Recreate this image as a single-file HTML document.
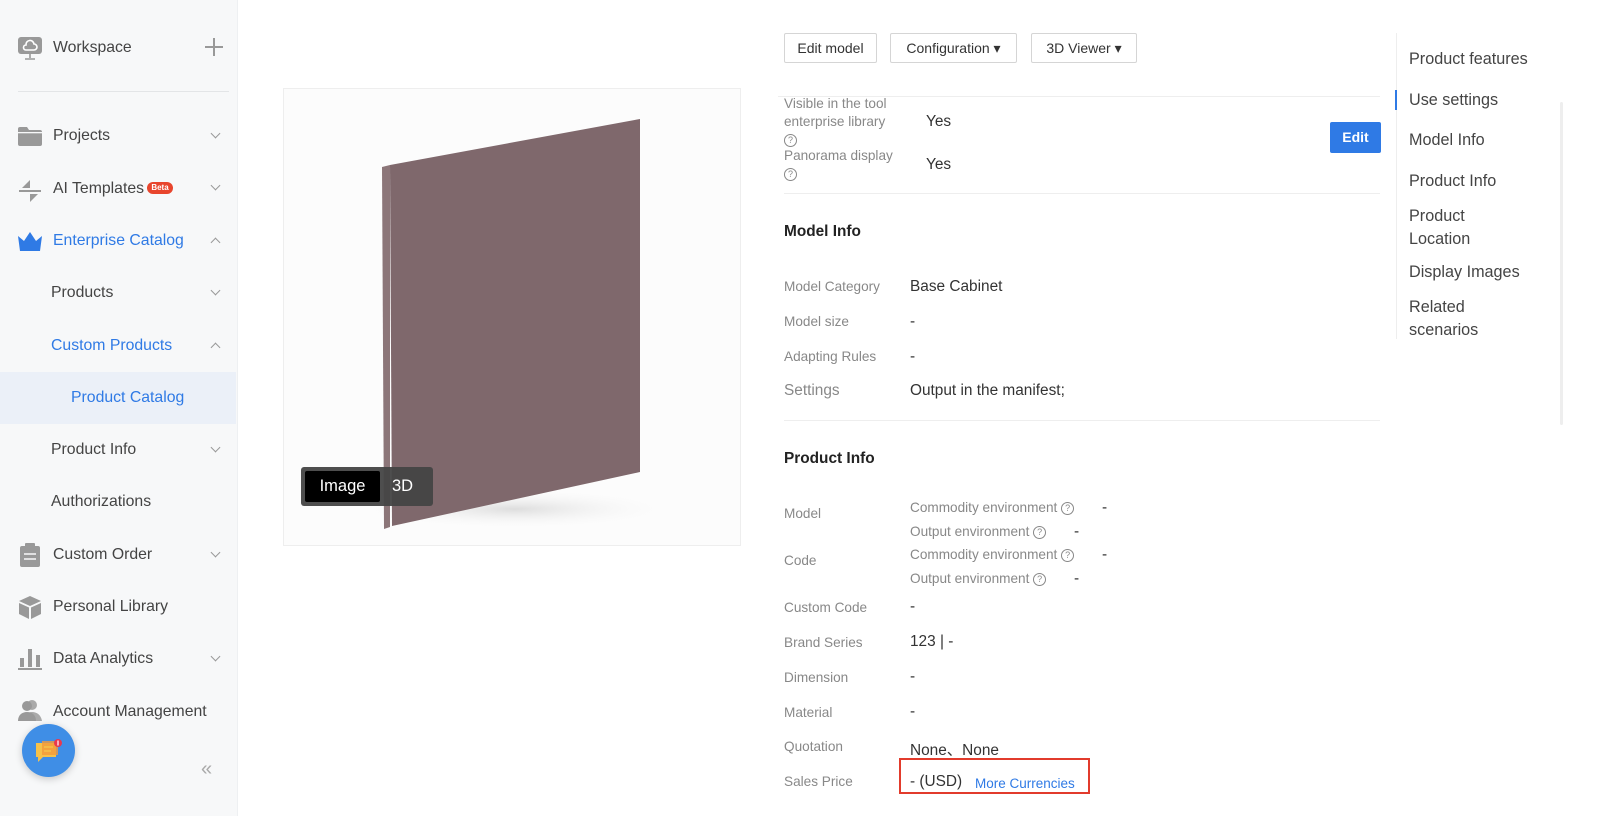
<!DOCTYPE html>
<html><head><meta charset="utf-8"><style>
*{margin:0;padding:0;box-sizing:border-box}
body{width:1600px;height:816px;overflow:hidden;background:#fff;font-family:"Liberation Sans",Arial,sans-serif;color:#333;position:relative}
.a{position:absolute;white-space:nowrap}
.sb{position:absolute;left:0;top:0;width:238px;height:816px;background:#f7f8f9;border-right:1px solid #eef0f2}
.nav{font-size:15.8px;color:#444}
.blue{color:#2f7ae5}
.chev{position:absolute;width:7px;height:7px;border-right:1.5px solid #999;border-bottom:1.5px solid #999;transform:rotate(45deg)}
.chev.up{transform:rotate(-135deg)}
.btn{position:absolute;top:33px;height:30px;border:1px solid #d5d5d5;border-radius:2px;font-size:14px;color:#333;line-height:28px;text-align:center;background:#fff}
.lbl{font-size:13.6px;color:#888}
.val{font-size:15.4px;color:#333}
.h{font-size:15.4px;font-weight:bold;color:#222}
.q{display:inline-block;width:13px;height:13px;border:1px solid #888;border-radius:50%;font-size:9px;line-height:11px;text-align:center;color:#888;vertical-align:middle}
.rn{font-size:16.2px;color:#444}
</style></head><body>
<div class="sb"></div>
<svg class="a" style="left:18px;top:36px" width="24" height="25" viewBox="0 0 24 25"><rect x="0" y="1" width="24" height="17" rx="3" fill="#999"/><path d="M8 14h8a3 3 0 0 0 0-6 4 4 0 0 0-8 1 2.5 2.5 0 0 0 0 5z" fill="none" stroke="#fff" stroke-width="1.6"/><path d="M12 18v4M7 23h10" stroke="#999" stroke-width="1.6"/></svg>
<div class="a nav" style="left:53px;top:39px">Workspace</div>
<div class="a" style="left:205px;top:46px;width:18px;height:1.5px;background:#999"></div>
<div class="a" style="left:213px;top:38px;width:1.5px;height:18px;background:#999"></div>
<div class="a" style="left:18px;top:91px;width:211px;height:1px;background:#e3e5e7"></div>
<svg class="a" style="left:18px;top:126px" width="24" height="20"><path d="M0 3a2 2 0 0 1 2-2h7l2 3h11a2 2 0 0 1 2 2v12a2 2 0 0 1-2 2H2a2 2 0 0 1-2-2z" fill="#999"/><rect x="0" y="6" width="24" height="1.3" fill="#f7f8f9"/></svg>
<div class="a nav" style="left:53px;top:127px">Projects</div><div class="chev" style="left:212px;top:130px"></div>
<svg class="a" style="left:19px;top:180px" width="22" height="22"><path d="M11 0v8H3zM0 10h22v2H0zM11 22v-8h8z" fill="#999"/></svg>
<div class="a nav" style="left:53px;top:180px">AI Templates</div>
<div class="a" style="left:147px;top:182px;width:26px;height:12px;background:#e8452d;border-radius:6px;color:#fff;font-size:8px;font-weight:bold;line-height:12px;text-align:center">Beta</div>
<div class="chev" style="left:212px;top:182px"></div>
<svg class="a" style="left:18px;top:232px" width="24" height="19"><path d="M0 4l6 5 6-9 6 9 6-5-2 15H2z" fill="#2f7ae5"/></svg>
<div class="a nav blue" style="left:53px;top:232px">Enterprise Catalog</div><div class="chev up" style="left:212px;top:239px"></div>
<div class="a nav" style="left:51px;top:284px">Products</div><div class="chev" style="left:212px;top:287px"></div>
<div class="a nav blue" style="left:51px;top:337px">Custom Products</div><div class="chev up" style="left:212px;top:344px"></div>
<div class="a" style="left:0;top:372px;width:236px;height:52px;background:#ebf0f8"></div>
<div class="a nav blue" style="left:71px;top:389px">Product Catalog</div>
<div class="a nav" style="left:51px;top:441px">Product Info</div><div class="chev" style="left:212px;top:444px"></div>
<div class="a nav" style="left:51px;top:493px">Authorizations</div>
<svg class="a" style="left:20px;top:543px" width="20" height="24"><rect x="0" y="3" width="20" height="21" rx="2" fill="#999"/><rect x="5" y="0" width="10" height="5" rx="1" fill="#999"/><path d="M4 11h12M4 16h12" stroke="#f7f8f9" stroke-width="1.5"/></svg>
<div class="a nav" style="left:53px;top:546px">Custom Order</div><div class="chev" style="left:212px;top:549px"></div>
<svg class="a" style="left:19px;top:596px" width="22" height="23"><path d="M11 0l11 5-11 5L0 5z" fill="#999"/><path d="M0 7l10 4.5V23L0 18z M22 7l-10 4.5V23l10-5z" fill="#999"/></svg>
<div class="a nav" style="left:53px;top:598px">Personal Library</div>
<svg class="a" style="left:18px;top:649px" width="24" height="22"><rect x="2" y="9" width="4" height="9" fill="#999"/><rect x="10" y="0" width="4" height="18" fill="#999"/><rect x="18" y="6" width="4" height="12" fill="#999"/><rect x="0" y="19" width="24" height="2" fill="#999"/></svg>
<div class="a nav" style="left:53px;top:650px">Data Analytics</div><div class="chev" style="left:212px;top:653px"></div>
<svg class="a" style="left:18px;top:699px" width="25" height="22"><circle cx="14" cy="6" r="5" fill="#aaa"/><path d="M5 22c0-6 4-9 9-9s9 3 10 9z" fill="#aaa"/><circle cx="9" cy="7" r="5" fill="#999"/><path d="M0 22c0-6 4-9 9-9s9 3 9 9z" fill="#999"/></svg>
<div class="a nav" style="left:53px;top:703px">Account Management</div>
<div class="a" style="left:22px;top:724px;width:53px;height:53px;border-radius:50%;background:#3f8ee6;box-shadow:0 2px 8px rgba(0,0,0,.2)"></div>
<svg class="a" style="left:34px;top:737px" width="30" height="28"><path d="M2 6h20v14H9l-5 5v-5H2z" fill="#f5c14a"/><rect x="8" y="4" width="16" height="14" fill="#f29a3a" opacity=".8"/><path d="M10 10h9M10 14h7" stroke="#f5c14a" stroke-width="1.5"/><circle cx="24" cy="6" r="4" fill="#e8384f"/><rect x="23.4" y="3.5" width="1.2" height="5" fill="#fff"/></svg>
<div class="a" style="left:201px;top:758px;font-size:20px;color:#aaa">«</div>
<div class="a" style="left:283px;top:88px;width:458px;height:458px;border:1px solid #eee;background:#fcfcfc"></div>
<svg class="a" style="left:284px;top:89px" width="456" height="456"><defs><radialGradient id="sh" cx="0.5" cy="0.5" r="0.5"><stop offset="0" stop-color="#ddd"/><stop offset="1" stop-color="#fcfcfc" stop-opacity="0"/></radialGradient></defs><ellipse cx="230" cy="420" rx="160" ry="20" fill="url(#sh)"/><path d="M98 78L106 76 106 438 100 440z" fill="#8c7679"/><path d="M106 76L356 30 356 383 108 437z" fill="#7f686c"/></svg>
<div class="a" style="left:301px;top:467px;width:132px;height:39px;background:#444;border-radius:3px;opacity:.95"></div>
<div class="a" style="left:305px;top:471px;width:75px;height:31px;background:#000;border-radius:2px;color:#fff;font-size:16.5px;text-align:center;line-height:31px">Image</div>
<div class="a" style="left:392px;top:477px;color:#fff;font-size:16.5px">3D</div>
<div class="btn" style="left:784px;width:93px">Edit model</div>
<div class="btn" style="left:890px;width:127px">Configuration ▾</div>
<div class="btn" style="left:1031px;width:106px">3D Viewer ▾</div>
<div class="a" style="left:778px;top:96px;width:602px;height:1px;background:#eee"></div>
<div class="a lbl" style="left:784px;top:95px;line-height:18px">Visible in the tool<br>enterprise library<br><span class="q">?</span></div>
<div class="a val" style="left:926px;top:113px">Yes</div>
<div class="a lbl" style="left:784px;top:147px;line-height:18px">Panorama display<br><span class="q">?</span></div>
<div class="a val" style="left:926px;top:156px">Yes</div>
<div class="a" style="left:1330px;top:122px;width:51px;height:31px;background:#2f7ae5;border-radius:2px;color:#fff;font-size:14px;font-weight:bold;text-align:center;line-height:31px">Edit</div>
<div class="a" style="left:784px;top:193px;width:596px;height:1px;background:#eee"></div>
<div class="a h" style="left:784px;top:223px">Model Info</div>
<div class="a lbl" style="left:784px;top:279px">Model Category</div><div class="a val" style="left:910px;top:278px">Base Cabinet</div>
<div class="a lbl" style="left:784px;top:314px">Model size</div><div class="a val" style="left:910px;top:313px">-</div>
<div class="a lbl" style="left:784px;top:349px">Adapting Rules</div><div class="a val" style="left:910px;top:348px">-</div>
<div class="a" style="left:784px;top:382px;font-size:15.4px;color:#888">Settings</div><div class="a val" style="left:910px;top:382px">Output in the manifest;</div>
<div class="a" style="left:784px;top:420px;width:596px;height:1px;background:#eee"></div>
<div class="a h" style="left:784px;top:450px">Product Info</div>
<div class="a lbl" style="left:784px;top:506px">Model</div>
<div class="a lbl" style="left:910px;top:500px">Commodity environment <span class="q">?</span></div><div class="a val" style="left:1102px;top:499px">-</div>
<div class="a lbl" style="left:910px;top:524px">Output environment <span class="q">?</span></div><div class="a val" style="left:1074px;top:523px">-</div>
<div class="a lbl" style="left:784px;top:553px">Code</div>
<div class="a lbl" style="left:910px;top:547px">Commodity environment <span class="q">?</span></div><div class="a val" style="left:1102px;top:546px">-</div>
<div class="a lbl" style="left:910px;top:571px">Output environment <span class="q">?</span></div><div class="a val" style="left:1074px;top:570px">-</div>
<div class="a lbl" style="left:784px;top:600px">Custom Code</div><div class="a val" style="left:910px;top:598px">-</div>
<div class="a lbl" style="left:784px;top:635px">Brand Series</div><div class="a val" style="left:910px;top:633px">123 | -</div>
<div class="a lbl" style="left:784px;top:670px">Dimension</div><div class="a val" style="left:910px;top:668px">-</div>
<div class="a lbl" style="left:784px;top:705px">Material</div><div class="a val" style="left:910px;top:703px">-</div>
<div class="a lbl" style="left:784px;top:739px">Quotation</div><div class="a val" style="left:910px;top:738px">None、None</div>
<div class="a lbl" style="left:784px;top:774px">Sales Price</div>
<div class="a" style="left:899px;top:758px;width:191px;height:36px;border:2px solid #e23b2c"></div>
<div class="a val" style="left:910px;top:773px">- (USD)</div><div class="a" style="left:975px;top:776px;font-size:13.5px;color:#2f7ae5">More Currencies</div>
<div class="a" style="left:1396px;top:33px;width:1px;height:306px;background:#eee"></div>
<div class="a" style="left:1395px;top:90px;width:2px;height:20px;background:#2f7ae5"></div>
<div class="a rn" style="left:1409px;top:50px">Product features</div>
<div class="a rn blue" style="left:1409px;top:91px">Use settings</div>
<div class="a rn" style="left:1409px;top:131px">Model Info</div>
<div class="a rn" style="left:1409px;top:172px">Product Info</div>
<div class="a rn" style="left:1409px;top:205px;line-height:23px">Product<br>Location</div>
<div class="a rn" style="left:1409px;top:263px">Display Images</div>
<div class="a rn" style="left:1409px;top:296px;line-height:23px">Related<br>scenarios</div>
<div class="a" style="left:1560px;top:102px;width:3px;height:323px;background:#eee;border-radius:2px"></div>
</body></html>
